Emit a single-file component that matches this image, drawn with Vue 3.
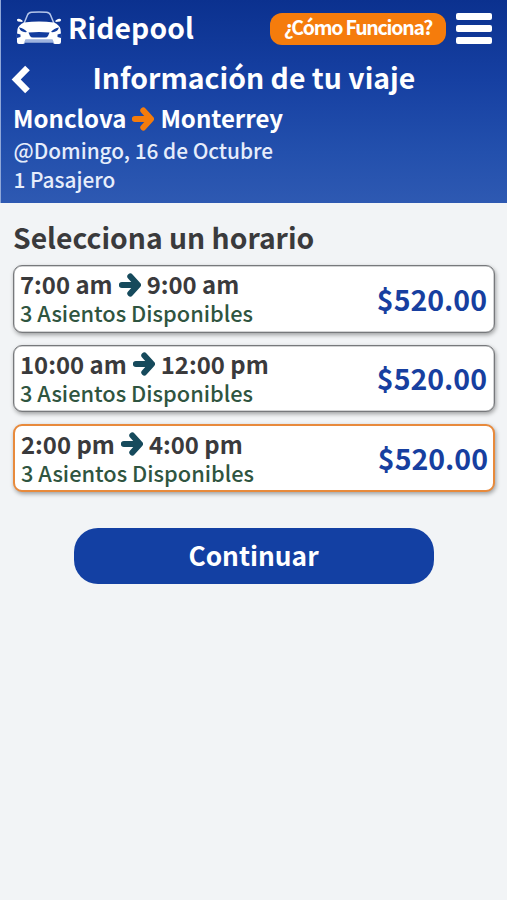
<script setup>
import { ref } from 'vue'

const trips = [
  { from: '7:00 am', to: '9:00 am', seats: '3 Asientos Disponibles', price: '$520.00' },
  { from: '10:00 am', to: '12:00 pm', seats: '3 Asientos Disponibles', price: '$520.00' },
  { from: '2:00 pm', to: '4:00 pm', seats: '3 Asientos Disponibles', price: '$520.00' },
]
const selected = ref(2)
</script>

<template>
  <div class="screen">
    <header class="header">
      <div class="topbar">
        <svg class="car" viewBox="0 0 46 34" width="46" height="34">
          <path d="M8 12.500 L11.500 4 Q12.500 1.500 15.500 1.300 Q23 .7 30.500 1.300 Q33.500 1.500 34.500 4 L38 12.500" fill="none" stroke="#b5c6ea" stroke-width="1.500" />
          <path d="M1 8.500 Q1.500 7.500 4 8 L6.500 9.500 V11 L2 10.500 Q.8 10 1 8.500Z M45 8.500 Q44.500 7.500 42 8 L39.500 9.500 V11 L44 10.500 Q45.200 10 45 8.500Z" fill="#fff" />
          <path d="M8 11.500 Q23 9.500 38 11.500 Q43.500 14 44.500 18 Q45.500 24 45 31 Q45 33 43 33 H39 Q37 33 37 31 L36.500 29.500 H9.500 L9 31 Q9 33 7 33 H3 Q1 33 1 31 Q.5 24 1.500 18 Q2.500 14 8 11.500Z" fill="#fff" />
          <path d="M3 16.500 Q8 17 11 21 Q5 22 3 16.500Z M43 16.500 Q38 17 35 21 Q41 22 43 16.500Z M12.500 21.500 Q23 20.500 33.500 21.500 L32 25 Q31 26.500 29 26.500 H17 Q15 26.500 14 25Z M1 22.500 L4.500 23.500 L4.500 26 L1 27Z M45 22.500 L41.500 23.500 L41.500 26 L45 27Z" fill="#123c9e" />
          <path d="M9.500 28.300 H36.500 L38 31.800 H8Z" fill="#9eb3de" />
        </svg>
        <span class="brand">Ridepool</span>
        <button class="how">¿Cómo Funciona?</button>
        <button class="menu" aria-label="Menú"><i></i><i></i><i></i></button>
      </div>
      <div class="titlebar">
        <svg class="back" viewBox="0 0 20 30" width="20" height="30">
          <path d="M16.500 3 L5.200 14.500 L16.500 26" fill="none" stroke="#fff" stroke-width="6.500" />
        </svg>
        <h1>Información de tu viaje</h1>
      </div>
      <div class="route">
        <span>Monclova</span>
        <svg class="arrow" viewBox="0 0 22 24" width="22" height="24">
          <path d="M2.800 12 H18 M11.300 3.500 L19 12 L11.300 20.500" />
        </svg>
        <span>Monterrey</span>
      </div>
      <div class="date">@Domingo, 16 de Octubre</div>
      <div class="pax">1 Pasajero</div>
    </header>

    <main class="main">
      <h2>Selecciona un horario</h2>
      <div class="trips">
        <div
          v-for="(t, i) in trips"
          :key="i"
          class="trip"
          :class="{ selected: selected === i }"
          @click="selected = i"
        >
          <div class="info">
            <div class="times">
              <span>{{ t.from }}</span>
              <svg class="arrow" viewBox="0 0 22 24" width="22" height="24">
                <path d="M2.800 12 H18 M11.300 3.500 L19 12 L11.300 20.500" />
              </svg>
              <span>{{ t.to }}</span>
            </div>
            <div class="seats">{{ t.seats }}</div>
          </div>
          <div class="price">{{ t.price }}</div>
        </div>
      </div>
      <button class="continue">Continuar</button>
    </main>
  </div>
</template>

<style>
body {
  background: #f2f4f6;
}
</style>

<style scoped>
.screen {
  box-sizing: border-box;
  width: 507px;
  height: 900px;
  overflow: hidden;
  background: #f2f4f6;
  font-family: "Noto Sans CJK SC", "Noto Sans", sans-serif;
  white-space: nowrap;
}
button {
  border: 0;
  padding: 0;
  font-family: inherit;
  color: #fff;
}
h1,
h2 {
  margin: 0;
}
.header {
  box-sizing: border-box;
  height: 203px;
  border-left: 1px solid #8fa7d8;
  background: linear-gradient(#0b318f 0%, #1640a2 40%, #2350ad 75%, #2e59b2 100%);
  color: #fff;
}
.topbar {
  display: flex;
  align-items: center;
  height: 55px;
  padding: 0 15px;
}
.brand {
  margin-left: 6px;
  font-size: 28.300px;
  line-height: 38px;
  margin-bottom: 2px;
  font-weight: 700;
  letter-spacing: 0.120px;
}
.how {
  width: 176px;
  height: 32px;
  margin: 2px 10px 0 auto;
  border-radius: 12px;
  background: #f57c0c;
  font-size: 19.500px;
  line-height: 28px;
  padding-bottom: 4px;
  font-weight: 700;
  letter-spacing: -1.250px;
}
.menu {
  display: flex;
  flex-direction: column;
  gap: 5px;
  width: 36px;
  margin-top: 2px;
  background: none;
}
.menu i {
  height: 7px;
  border-radius: 2px;
  background: #fff;
}
.titlebar {
  display: flex;
  align-items: center;
  height: 43px;
  padding-left: 10px;
}
.back {
  margin-top: 6px;
}
h1 {
  margin-left: 61.500px;
  padding-top: 1px;
  font-size: 28.400px;
  line-height: 42px;
  font-weight: 700;
}
.route {
  display: flex;
  align-items: center;
  height: 39px;
  padding: 1px 0 0 12px;
  box-sizing: border-box;
  font-size: 24px;
  line-height: 30px;
  font-weight: 700;
}
.arrow {
  flex: none;
  margin: 1px 6px 0;
}
.arrow path {
  fill: none;
  stroke: #164a5c;
  stroke-width: 6;
  stroke-linecap: round;
  stroke-linejoin: round;
}
.route .arrow path {
  stroke: #f57c0c;
}
.date,
.pax {
  padding-left: 12.500px;
  font-size: 20.800px;
  font-weight: 500;
  line-height: 27px;
  color: #e6edfb;
}
.pax {
  line-height: 30px;
}
.main {
  display: flex;
  flex-direction: column;
  padding: 6px 12px 0 13px;
}
h2 {
  font-size: 28.300px;
  line-height: 56px;
  font-weight: 700;
  color: #3a3a3c;
}
.trips {
  display: flex;
  flex-direction: column;
  gap: 12px;
}
.trip {
  box-sizing: border-box;
  display: flex;
  align-items: center;
  justify-content: space-between;
  height: 67.500px;
  padding: 0 7px 0 6px;
  border: 1px solid #77797c;
  border-radius: 9px;
  background: #fff;
  box-shadow: 1px 2px 4px rgba(0, 0, 0, 0.35), inset 0 0 0 0.500px #a5a7aa;
}
.trip.selected {
  border: 2px solid #e88a3c;
  padding: 1px 5px 0 6px;
  box-shadow: 1px 2px 4px rgba(0, 0, 0, 0.35);
}
.times {
  display: flex;
  align-items: center;
  height: 30px;
  font-size: 23.900px;
  line-height: 30px;
  font-weight: 700;
  color: #3a3a3c;
}
.seats {
  font-size: 21.800px;
  line-height: 28px;
  padding-bottom: 1px;
  font-weight: 500;
  color: #2f5540;
}
.price {
  font-size: 28.500px;
  line-height: 40px;
  font-weight: 700;
  color: #173fa0;
}
.continue {
  align-self: center;
  width: 360px;
  height: 56px;
  margin: 36.500px 1px 0 0;
  border-radius: 24px;
  background: #1340a3;
  font-size: 26.300px;
  line-height: 52px;
  padding-bottom: 2px;
  font-weight: 700;
}
</style>
